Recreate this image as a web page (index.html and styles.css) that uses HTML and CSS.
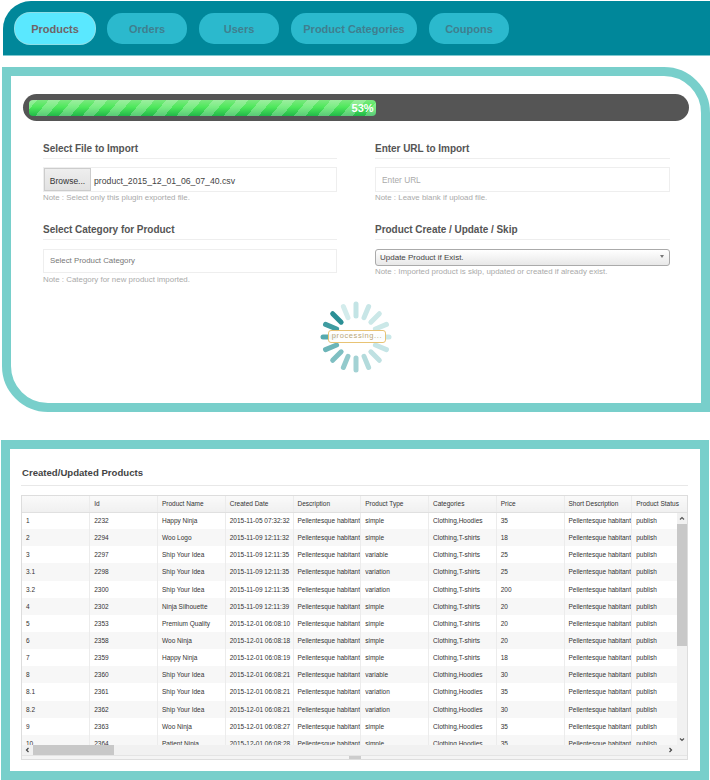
FILE: index.html
```html
<!DOCTYPE html>
<html lang="en">
<head>
  <meta charset="UTF-8">
  <title>Product Import</title>
  <link rel="stylesheet" href="styles.css">
</head>
<body>
  <nav class="tabs">
    <a class="tab active">Products</a>
    <a class="tab">Orders</a>
    <a class="tab">Users</a>
    <a class="tab wide">Product Categories</a>
    <a class="tab">Coupons</a>
  </nav>

  <section class="import-panel">
    <div class="progress">
      <div class="progress-fill" style="width: 53%">53%</div>
    </div>

    <div class="form-grid">
      <div class="field">
        <h4>Select File to Import</h4>
        <div class="file-box">
          <button class="browse">Browse...</button>
          <span class="file-name">product_2015_12_01_06_07_40.csv</span>
        </div>
        <p class="note">Note : Select only this plugin exported file.</p>
      </div>
      <div class="field">
        <h4>Enter URL to Import</h4>
        <input class="text-input tall" type="text" placeholder="Enter URL">
        <p class="note">Note : Leave blank if upload file.</p>
      </div>
      <div class="field lower">
        <h4>Select Category for Product</h4>
        <input class="text-input dark" type="text" placeholder="Select Product Category">
        <p class="note">Note : Category for new product imported.</p>
      </div>
      <div class="field lower">
        <h4>Product Create / Update / Skip</h4>
        <div class="select-box">Update Product if Exist.<span class="caret"></span></div>
        <p class="note flush">Note : Imported product is skip, updated or created if already exist.</p>
      </div>
    </div>

    <div class="spinner">
      <svg width="80" height="80" viewBox="-40 -40 80 80">
        <g stroke-width="5" stroke-linecap="round" fill="none">
          <line x1="0" y1="-21" x2="0" y2="-33" stroke="#c3e4e5"/>
          <line x1="0" y1="-21" x2="0" y2="-33" stroke="#c8e6e7" transform="rotate(22.5)"/>
          <line x1="0" y1="-21" x2="0" y2="-33" stroke="#cbe8e8" transform="rotate(45)"/>
          <line x1="0" y1="-21" x2="0" y2="-33" stroke="#cbe8e8" transform="rotate(67.5)"/>
          <line x1="0" y1="-21" x2="0" y2="-33" stroke="#cbe8e8" transform="rotate(90)"/>
          <line x1="0" y1="-21" x2="0" y2="-33" stroke="#c6e5e6" transform="rotate(112.5)"/>
          <line x1="0" y1="-21" x2="0" y2="-33" stroke="#bfe1e2" transform="rotate(135)"/>
          <line x1="0" y1="-21" x2="0" y2="-33" stroke="#b3dbdc" transform="rotate(157.5)"/>
          <line x1="0" y1="-21" x2="0" y2="-33" stroke="#a3d2d4" transform="rotate(180)"/>
          <line x1="0" y1="-21" x2="0" y2="-33" stroke="#93cacc" transform="rotate(202.5)"/>
          <line x1="0" y1="-21" x2="0" y2="-33" stroke="#7fbfc2" transform="rotate(225)"/>
          <line x1="0" y1="-21" x2="0" y2="-33" stroke="#6cb5b8" transform="rotate(247.5)"/>
          <line x1="0" y1="-21" x2="0" y2="-33" stroke="#56aaae" transform="rotate(270)"/>
          <line x1="0" y1="-21" x2="0" y2="-33" stroke="#3f9ca1" transform="rotate(292.5)"/>
          <line x1="0" y1="-21" x2="0" y2="-33" stroke="#2b8f95" transform="rotate(315)"/>
          <line x1="0" y1="-21" x2="0" y2="-33" stroke="#d3ecec" transform="rotate(337.5)"/>
        </g>
      </svg>
      <span class="spinner-label">processing...</span>
    </div>
  </section>

  <section class="result-panel">
    <h4 class="result-title">Created/Updated Products</h4>
    <div class="data-grid">
      <div class="grid-view">
        <table>
          <thead>
            <tr><th></th><th>Id</th><th>Product Name</th><th>Created Date</th><th>Description</th><th>Product Type</th><th>Categories</th><th>Price</th><th>Short Description</th><th>Product Status</th></tr>
          </thead>
          <tbody>
            <tr><td>1</td><td>2232</td><td>Happy Ninja</td><td>2015-11-05 07:32:32</td><td>Pellentesque habitant</td><td>simple</td><td>Clothing,Hoodies</td><td>35</td><td>Pellentesque habitant</td><td>publish</td></tr>
            <tr><td>2</td><td>2294</td><td>Woo Logo</td><td>2015-11-09 12:11:32</td><td>Pellentesque habitant</td><td>simple</td><td>Clothing,T-shirts</td><td>18</td><td>Pellentesque habitant</td><td>publish</td></tr>
            <tr><td>3</td><td>2297</td><td>Ship Your Idea</td><td>2015-11-09 12:11:35</td><td>Pellentesque habitant</td><td>variable</td><td>Clothing,T-shirts</td><td>25</td><td>Pellentesque habitant</td><td>publish</td></tr>
            <tr><td>3.1</td><td>2298</td><td>Ship Your Idea</td><td>2015-11-09 12:11:35</td><td>Pellentesque habitant</td><td>variation</td><td>Clothing,T-shirts</td><td>25</td><td>Pellentesque habitant</td><td>publish</td></tr>
            <tr><td>3.2</td><td>2300</td><td>Ship Your Idea</td><td>2015-11-09 12:11:35</td><td>Pellentesque habitant</td><td>variation</td><td>Clothing,T-shirts</td><td>200</td><td>Pellentesque habitant</td><td>publish</td></tr>
            <tr><td>4</td><td>2302</td><td>Ninja Silhouette</td><td>2015-11-09 12:11:39</td><td>Pellentesque habitant</td><td>simple</td><td>Clothing,T-shirts</td><td>20</td><td>Pellentesque habitant</td><td>publish</td></tr>
            <tr><td>5</td><td>2353</td><td>Premium Quality</td><td>2015-12-01 06:08:10</td><td>Pellentesque habitant</td><td>simple</td><td>Clothing,T-shirts</td><td>20</td><td>Pellentesque habitant</td><td>publish</td></tr>
            <tr><td>6</td><td>2358</td><td>Woo Ninja</td><td>2015-12-01 06:08:18</td><td>Pellentesque habitant</td><td>simple</td><td>Clothing,T-shirts</td><td>20</td><td>Pellentesque habitant</td><td>publish</td></tr>
            <tr><td>7</td><td>2359</td><td>Happy Ninja</td><td>2015-12-01 06:08:19</td><td>Pellentesque habitant</td><td>simple</td><td>Clothing,T-shirts</td><td>18</td><td>Pellentesque habitant</td><td>publish</td></tr>
            <tr><td>8</td><td>2360</td><td>Ship Your Idea</td><td>2015-12-01 06:08:21</td><td>Pellentesque habitant</td><td>variable</td><td>Clothing,Hoodies</td><td>30</td><td>Pellentesque habitant</td><td>publish</td></tr>
            <tr><td>8.1</td><td>2361</td><td>Ship Your Idea</td><td>2015-12-01 06:08:21</td><td>Pellentesque habitant</td><td>variation</td><td>Clothing,Hoodies</td><td>35</td><td>Pellentesque habitant</td><td>publish</td></tr>
            <tr><td>8.2</td><td>2362</td><td>Ship Your Idea</td><td>2015-12-01 06:08:21</td><td>Pellentesque habitant</td><td>variation</td><td>Clothing,Hoodies</td><td>30</td><td>Pellentesque habitant</td><td>publish</td></tr>
            <tr><td>9</td><td>2363</td><td>Woo Ninja</td><td>2015-12-01 06:08:27</td><td>Pellentesque habitant</td><td>simple</td><td>Clothing,Hoodies</td><td>35</td><td>Pellentesque habitant</td><td>publish</td></tr>
            <tr><td>10</td><td>2364</td><td>Patient Ninja</td><td>2015-12-01 06:08:28</td><td>Pellentesque habitant</td><td>simple</td><td>Clothing,Hoodies</td><td>35</td><td>Pellentesque habitant</td><td>publish</td></tr>
          </tbody>
        </table>
        <div class="vbar">
          <svg class="arrow" width="10" height="11" viewBox="0 0 10 11"><path d="M3 6.5 5 4.5 7 6.5" fill="none" stroke="#555" stroke-width="1.2"/></svg>
          <div class="vbar-thumb"></div>
          <svg class="arrow bottom" width="10" height="11" viewBox="0 0 10 11"><path d="M3 4.5 5 6.5 7 4.5" fill="none" stroke="#555" stroke-width="1.2"/></svg>
        </div>
      </div>
      <div class="hbar">
        <svg class="arrow" width="11" height="10" viewBox="0 0 11 10"><path d="M6.5 3 4.5 5 6.5 7" fill="none" stroke="#444" stroke-width="1.2"/></svg>
        <div class="hbar-thumb"></div>
        <svg class="arrow right" width="11" height="10" viewBox="0 0 11 10"><path d="M4.5 3 6.5 5 4.5 7" fill="none" stroke="#444" stroke-width="1.2"/></svg>
      </div>
      <div class="resize-bar"><span class="resize-grip"></span></div>
    </div>
  </section>
</body>
</html>
```

FILE: styles.css
```css
* {
  box-sizing: border-box;
}
body {
  margin: 0;
  font-family: "Liberation Sans", Arial, sans-serif;
  background: #fff;
  color: #555;
}
.tabs {
  display: flex;
  gap: 12px;
  align-items: flex-start;
  height: 55px;
  margin: 1px 0 0 3px;
  padding: 12px;
  background: #00879a;
  border-top-left-radius: 28px;
  border-bottom: 1px solid #7fc8cf;
}
.tab {
  width: 80px;
  height: 31px;
  line-height: 32px;
  border-radius: 15px;
  text-align: center;
  font-size: 11px;
  font-weight: bold;
  color: #3f7f8f;
  background: #2bb9cd;
}
.tab.wide {
  width: 126px;
}
.tab.active {
  background: #5ae8ff;
  color: #6f6468;
  box-shadow: 0 0 0 1px #8ddfe8;
}
.import-panel {
  height: 345px;
  margin: 11px 0 0 2px;
  padding: 18px 12px 0;
  border: 9px solid #78cfcb;
  border-top-right-radius: 46px;
  border-bottom-left-radius: 46px;
}
.progress {
  height: 27px;
  padding: 6px;
  border-radius: 14px;
  background: #555;
}
.progress-fill {
  height: 16px;
  border-radius: 4px;
  padding-right: 2px;
  text-align: right;
  font-size: 11px;
  font-weight: bold;
  line-height: 16px;
  color: #fff;
  background:
    repeating-linear-gradient(-50deg, rgba(255,255,255,0.25) 0 9px, transparent 9px 18px),
    linear-gradient(#7be87f, #4de85b 45%, #22b84a);
}
.form-grid {
  display: grid;
  grid-template-columns: 294px 295px;
  column-gap: 38px;
  margin: 21px 0 0 20px;
}
.field {
  height: 81px;
}
.field h4 {
  margin: 0 0 8px;
  padding-bottom: 3px;
  border-bottom: 1px solid #eee;
  font-size: 10px;
  line-height: 13px;
  font-weight: bold;
  letter-spacing: -0.03px;
  color: #555;
}
.field.lower h4 {
  margin-bottom: 9px;
}
.file-box {
  display: flex;
  align-items: center;
  height: 25px;
  border: 1px solid #eee;
}
.browse {
  width: 47px;
  height: 23px;
  padding: 2px 0 0;
  border: 1px solid #ccc;
  border-radius: 0;
  background: linear-gradient(#eee, #e2e2e2);
  font-family: inherit;
  font-size: 8.5px;
  color: #333;
}
.file-name {
  margin: 2px 0 0 3px;
  font-size: 8.7px;
  color: #444;
}
.text-input {
  display: block;
  width: 100%;
  height: 25px;
  padding: 0 6px;
  border: 1px solid #eee;
  font-family: inherit;
  font-size: 8.3px;
  outline: none;
}
.text-input::placeholder {
  color: #aaa;
}
.text-input.dark {
  height: 24px;
  padding-bottom: 2px;
  font-size: 7.85px;
}
.text-input.dark::placeholder {
  color: #777;
}
.select-box {
  position: relative;
  height: 17px;
  padding: 0 4px;
  border: 1px solid #aaa;
  border-radius: 3px;
  background: linear-gradient(#fff, #e8e8e8);
  font-size: 8px;
  line-height: 15px;
  color: #444;
}
.caret {
  position: absolute;
  right: 5px;
  top: 5px;
  border: 2.5px solid transparent;
  border-top: 3px solid #777;
}
.note {
  margin: 1px 0 0;
  font-size: 7.9px;
  line-height: 10px;
  color: #aaa;
}
.lower .note {
  margin-top: 2px;
}
.lower .note.flush {
  margin-top: 1px;
}
.spinner {
  position: relative;
  width: 80px;
  height: 80px;
  margin: 0 auto;
  top: -7px;
}
.spinner-label {
  position: absolute;
  left: 12px;
  top: 33px;
  width: 58px;
  height: 13px;
  border: 1.5px solid #e8c374;
  border-radius: 3px;
  background: rgba(255,255,255,0.92);
  text-align: center;
  font-size: 7.5px;
  line-height: 10px;
  letter-spacing: 0.6px;
  color: #b9a779;
}
.result-panel {
  width: 708px;
  height: 340px;
  margin: 28px 0 0 1px;
  padding: 16px 12px 0 11px;
  border: 9px solid #78cfcb;
}
.result-title {
  margin: 0 0 9px;
  padding: 0 0 5px 1px;
  border-bottom: 1px solid #e8e8e8;
  font-size: 9.6px;
  line-height: 15px;
  color: #444;
}
.data-grid {
  width: 667px;
  border: 1px solid #ddd;
  background: #f1f1f1;
}
.grid-view {
  position: relative;
  height: 249px;
  overflow: hidden;
}
table {
  border-collapse: collapse;
  table-layout: fixed;
  width: 678px;
  font-size: 6.5px;
  color: #333;
}
th, td {
  height: 17.15px;
  padding: 0 4px;
  border-right: 1px solid #ececec;
  text-align: left;
  white-space: nowrap;
  overflow: hidden;
}
th {
  height: 16px;
  font-weight: normal;
  background: linear-gradient(#fafafa, #f0f0f0);
  border-bottom: 1px solid #e0e0e0;
}
td {
  background: #fff;
}
tbody tr:nth-child(even) td {
  background: #f7f7f7;
}
.vbar {
  position: absolute;
  right: 0;
  top: 17px;
  width: 10px;
  height: 232px;
  display: flex;
  flex-direction: column;
  background: #f1f1f1;
}
.vbar-thumb {
  height: 122px;
  background: #c8c8c8;
}
.arrow.bottom {
  margin-top: auto;
}
.hbar {
  display: flex;
  align-items: center;
  height: 10px;
  background: #f1f1f1;
}
.hbar-thumb {
  width: 81px;
  height: 10px;
  background: #c8c8c8;
}
.arrow.right {
  margin-left: auto;
  margin-right: 11px;
}
.resize-bar {
  display: flex;
  justify-content: center;
  height: 4px;
  background: #f4f4f4;
  border-top: 1px solid #e4e4e4;
}
.resize-grip {
  width: 12px;
  height: 3px;
  background: #ccc;
}
```
